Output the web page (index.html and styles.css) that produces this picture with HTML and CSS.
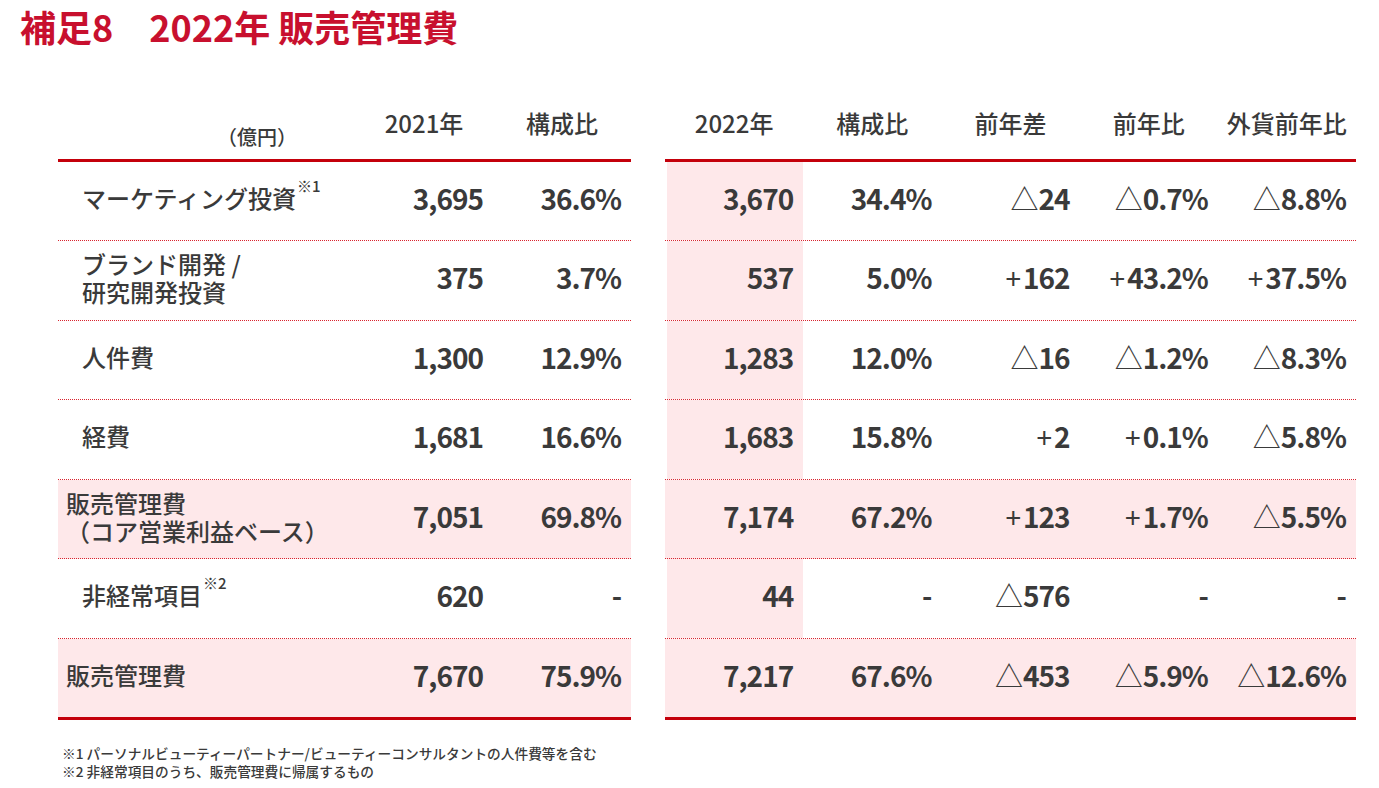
FILE: index.html
```html
<!DOCTYPE html>
<html lang="ja">
<head>
<meta charset="utf-8">
<title>補足8 2022年 販売管理費</title>
<link rel="stylesheet" href="styles.css">
</head>
<body>
<h1 class="title">補足8　2022年 販売管理費</h1>
<div class="tables">
  <div class="tbl tbl-left">
    <div class="row head">
      <div class="unit">（億円）</div>
      <div class="hc">2021年</div>
      <div class="hc">構成比</div>
    </div>
    <div class="row">
      <div class="label">マーケティング投資<span class="note">※1</span></div>
      <div class="num">3,695</div>
      <div class="num">36.6%</div>
    </div>
    <div class="row">
      <div class="label two"><span class="ln">ブランド開発 /</span><span class="ln">研究開発投資</span></div>
      <div class="num">375</div>
      <div class="num">3.7%</div>
    </div>
    <div class="row">
      <div class="label">人件費</div>
      <div class="num">1,300</div>
      <div class="num">12.9%</div>
    </div>
    <div class="row">
      <div class="label">経費</div>
      <div class="num">1,681</div>
      <div class="num">16.6%</div>
    </div>
    <div class="row hl">
      <div class="label two sub"><span class="ln">販売管理費</span><span class="ln">（コア営業利益ベース）</span></div>
      <div class="num">7,051</div>
      <div class="num">69.8%</div>
    </div>
    <div class="row">
      <div class="label">非経常項目<span class="note">※2</span></div>
      <div class="num">620</div>
      <div class="num">-</div>
    </div>
    <div class="row hl last">
      <div class="label sub">販売管理費</div>
      <div class="num">7,670</div>
      <div class="num">75.9%</div>
    </div>
  </div>

  <div class="tbl tbl-right">
    <div class="row head">
      <div class="hc">2022年</div>
      <div class="hc">構成比</div>
      <div class="hc">前年差</div>
      <div class="hc">前年比</div>
      <div class="hc">外貨前年比</div>
    </div>
    <div class="row">
      <div class="num cur">3,670</div>
      <div class="num">34.4%</div>
      <div class="num"><span class="tri">△</span>24</div>
      <div class="num"><span class="tri">△</span>0.7%</div>
      <div class="num"><span class="tri">△</span>8.8%</div>
    </div>
    <div class="row">
      <div class="num cur">537</div>
      <div class="num">5.0%</div>
      <div class="num"><span class="sign">+</span>162</div>
      <div class="num"><span class="sign">+</span>43.2%</div>
      <div class="num"><span class="sign">+</span>37.5%</div>
    </div>
    <div class="row">
      <div class="num cur">1,283</div>
      <div class="num">12.0%</div>
      <div class="num"><span class="tri">△</span>16</div>
      <div class="num"><span class="tri">△</span>1.2%</div>
      <div class="num"><span class="tri">△</span>8.3%</div>
    </div>
    <div class="row">
      <div class="num cur">1,683</div>
      <div class="num">15.8%</div>
      <div class="num"><span class="sign">+</span>2</div>
      <div class="num"><span class="sign">+</span>0.1%</div>
      <div class="num"><span class="tri">△</span>5.8%</div>
    </div>
    <div class="row hl">
      <div class="num">7,174</div>
      <div class="num">67.2%</div>
      <div class="num"><span class="sign">+</span>123</div>
      <div class="num"><span class="sign">+</span>1.7%</div>
      <div class="num"><span class="tri">△</span>5.5%</div>
    </div>
    <div class="row">
      <div class="num cur">44</div>
      <div class="num">-</div>
      <div class="num"><span class="tri">△</span>576</div>
      <div class="num">-</div>
      <div class="num">-</div>
    </div>
    <div class="row hl last">
      <div class="num">7,217</div>
      <div class="num">67.6%</div>
      <div class="num"><span class="tri">△</span>453</div>
      <div class="num"><span class="tri">△</span>5.9%</div>
      <div class="num"><span class="tri">△</span>12.6%</div>
    </div>
  </div>
</div>
<div class="notes">
  <p>※1 パーソナルビューティーパートナー/ビューティーコンサルタントの人件費等を含む</p>
  <p>※2 非経常項目のうち、販売管理費に帰属するもの</p>
</div>
</body>
</html>
```

FILE: styles.css
```css
* {
  box-sizing: border-box;
}

html, body {
  margin: 0;
  padding: 0;
  background: #ffffff;
}

body {
  width: 1379px;
  height: 788px;
  overflow: hidden;
  font-family: "Noto Sans CJK JP", "Noto Sans", sans-serif;
  color: #3a3a3a;
}

.title {
  margin: 0;
  padding: 0 0 0 20px;
  height: 52px;
  font-size: 36px;
  line-height: 52px;
  font-weight: 700;
  color: #c8102e;
}

.tables {
  display: flex;
  gap: 34px;
  margin-top: 48px;
  padding-left: 58px;
}

.tbl-left .row {
  display: grid;
  grid-template-columns: 297px 138px 138px;
}

.tbl-right .row {
  display: grid;
  grid-template-columns: repeat(5, 138.2px);
}

.row {
  height: 79.5px;
  border-bottom: 1px dotted #d9242f;
}

.row.head {
  height: 61.5px;
  border-bottom: 3px solid #c4000b;
}

.row.last {
  height: 81.5px;
  border-bottom: 3px solid #c4000b;
}

.row.hl {
  background: #fee8ea;
}

.hc {
  align-self: center;
  text-align: center;
  font-size: 24px;
  line-height: 30px;
  font-weight: 500;
  padding-bottom: 12px;
}

.unit {
  align-self: end;
  padding-left: 159px;
  padding-bottom: 9px;
  font-size: 20px;
  line-height: 26px;
  font-weight: 500;
}

.label {
  align-self: center;
  padding-left: 24px;
  padding-bottom: 6px;
  font-size: 24px;
  line-height: 30px;
  font-weight: 500;
  white-space: nowrap;
}

.label.two {
  display: flex;
  flex-direction: column;
  padding-bottom: 4px;
}

.label.two .ln {
  display: block;
  height: 28px;
  line-height: 28px;
}

.label.sub {
  padding-left: 8px;
}

.note {
  display: inline-block;
  vertical-align: top;
  font-size: 15px;
  line-height: 15px;
  margin-top: -5px;
  margin-left: 1px;
  font-weight: 500;
}

.num {
  display: flex;
  align-items: center;
  justify-content: flex-end;
  padding-right: 10px;
  padding-bottom: 6px;
  font-size: 28px;
  font-weight: 700;
  letter-spacing: -1px;
  white-space: nowrap;
}

.num .tri {
  font-weight: 400;
  letter-spacing: 0;
}

.num .sign {
  font-weight: 400;
  letter-spacing: 0;
  margin-right: 2px;
}

.num.cur {
  background: #fee8ea;
  border-left: 2px solid #ffffff;
}

.notes {
  margin-top: 24px;
  padding-left: 62px;
  font-size: 13.7px;
  line-height: 18px;
  font-weight: 500;
  color: #3a3a3a;
}

.notes p {
  margin: 0;
}
```
